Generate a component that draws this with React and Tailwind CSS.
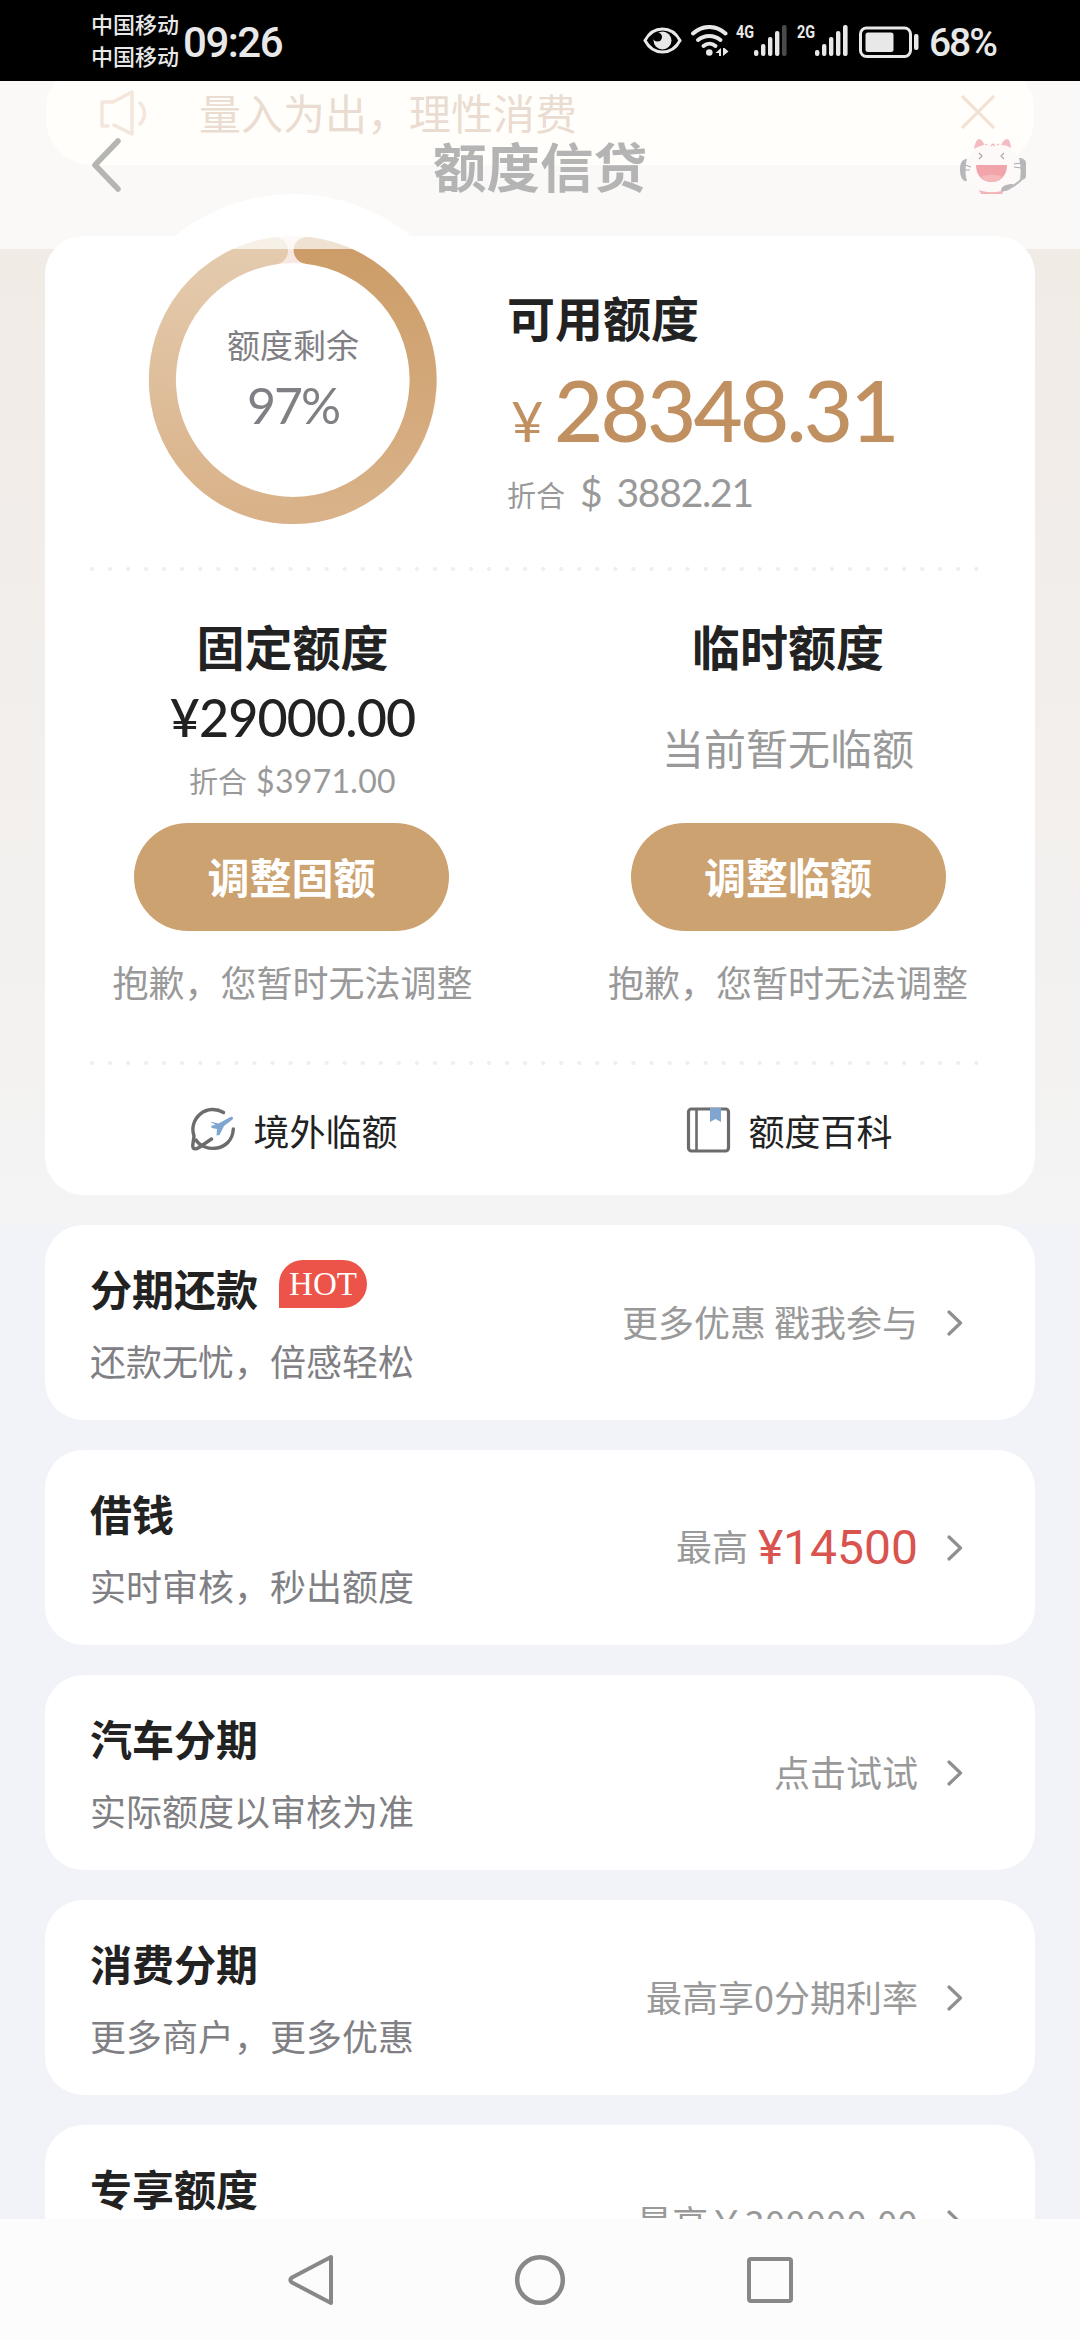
import React from 'react';

const services = [
  { title: '分期还款', desc: '还款无忧，倍感轻松', action: '更多优惠 戳我参与', hot: true },
  { title: '借钱', desc: '实时审核，秒出额度', action: '最高', amount: '¥14500' },
  { title: '汽车分期', desc: '实际额度以审核为准', action: '点击试试' },
  { title: '消费分期', desc: '更多商户，更多优惠', action: '最高享0分期利率' },
  { title: '专享额度', action: '最高', limit: '￥300000.00' },
];

const SignalBars = ({ label, weak }) => (
  <div className="flex h-[31px] items-start">
    <span className="w-[18px] origin-left scale-x-[0.8] text-[18px] leading-[14px] font-bold font-['Roboto',sans-serif]">{label}</span>
    <svg className="h-[31px] w-[34px]" viewBox="0 0 34 31" fill="#e8e8e8">
      <rect x="0" y="25" width="4.4" height="6" rx="2" />
      <rect x="7" y="19" width="4.4" height="12" rx="2" />
      <rect x="14" y="12" width="4.4" height="19" rx="2" />
      <rect x="21" y="6" width="4.4" height="25" rx="2" />
      <rect x="28" y="0" width="4.6" height="31" rx="2" fill={weak ? '#4a4a4a' : '#e8e8e8'} />
    </svg>
  </div>
);

const StatusBar = () => (
  <div className="flex h-[81px] shrink-0 items-start justify-between bg-black pl-[91px] pr-[84px] text-[#e8e8e8]">
    <div className="flex">
      <div className="flex flex-col gap-[10px] pt-[12px] text-[22px] leading-[22px] font-medium">
        <span>中国移动</span>
        <span>中国移动</span>
      </div>
      <span className="pt-[21px] pl-[4px] text-[42px] leading-[44px] font-medium tracking-[-1.500px] font-['Roboto',sans-serif]">09:26</span>
    </div>
    <div className="flex pt-[25px]">
      {/* Eye comfort */}
      <svg className="mt-[2px] h-[27px] w-[39px]" viewBox="0 0 39 27" fill="none">
        <path d="M2 13.5C6 6 12.500 2 19.500 2S33 6 37 13.500C33 21 26.500 25 19.500 25S6 21 2 13.500Z" stroke="#e8e8e8" strokeWidth="3" />
        <circle cx="19.500" cy="13.500" r="9" fill="#e8e8e8" />
        <circle cx="14.500" cy="10" r="4.500" fill="#000" />
      </svg>
      {/* Wifi */}
      <svg className="ml-[9px] h-[31px] w-[38px]" viewBox="0 0 38 31" fill="none">
        <path d="M2 8.500C11.500-.2 25-.2 34.500 8.500" stroke="#e8e8e8" strokeWidth="4" strokeLinecap="round" />
        <path d="M7 15C13.500 9.500 23 9.500 29.500 15" stroke="#e8e8e8" strokeWidth="4" strokeLinecap="round" />
        <path d="M12.500 21C16 18 21 18 24.500 21" stroke="#e8e8e8" strokeWidth="4" strokeLinecap="round" />
        <circle cx="18.300" cy="27.500" r="3.300" fill="#e8e8e8" />
        <path d="M30 23v8h-2v-3h-3.500zM32 31v-8h1.500l4 3.500z" fill="#e8e8e8" />
      </svg>
      <div className="ml-[7px]"><SignalBars label="4G" weak /></div>
      <div className="ml-[9px]"><SignalBars label="2G" /></div>
      {/* Battery */}
      <svg className="ml-[9px] h-[33px] w-[62px]" viewBox="0 0 62 33" fill="none">
        <rect x="2.500" y="3" width="50" height="28.500" rx="6" stroke="#e8e8e8" strokeWidth="3" />
        <rect x="7.500" y="7.500" width="28" height="19.500" rx="2.500" fill="#e8e8e8" />
        <rect x="56" y="9" width="4.500" height="16" rx="2" fill="#e8e8e8" />
      </svg>
      <span className="ml-[9px] mt-[-4px] text-[39px] leading-[44px] font-medium tracking-[-2px] font-['Roboto',sans-serif]">68%</span>
    </div>
  </div>
);

const CatAvatar = () => (
  <svg className="h-[56px] w-[68px]" viewBox="0 0 68 56" fill="none">
    <ellipse cx="34" cy="29" rx="27" ry="24" fill="#fdf9f9" />
    <path d="M15 11C16 5 18 1 20 1s5 3 5 6c-4 1-7 2-10 4ZM42 7c2-4 4-6 6-6s4 4 4 9c-3-2-6-3-10-3Z" fill="#f3bcc2" />
    <path d="M26 6l2 1M38 7l2-1M32 8l2-2 2 2" stroke="#f0b5ba" strokeWidth="1.200" />
    <path d="M20 15l3 3-3 3M45 15l-3 3 3 3" stroke="#a9a9a9" strokeWidth="1.200" />
    <path d="M17 27h31c0 10-6 17-15.500 17S17 37 17 27Z" fill="#f1a4aa" />
    <path d="M22 39c4-3 17-3 21 0-3 3-6 5-10.500 5S25 42 22 39Z" fill="#f5b9bb" />
    <path d="M20 52c8 3 18 3 25 0l-2 4H22z" fill="#f3b4b8" />
    <path d="M8 21c-5 0-7 4-7 11s3 12 7 11c-2-6-2-15 0-22ZM60 20c4 0 7 2 7 5v13c0 3-3 4-6 4 1-7 1-15-1-22Z" fill="#b7b6b9" />
    <path d="M6 27l6 2M6 32h5M62 25l-7 1M62 30l-7-1" stroke="#aaa" strokeWidth="1" />
    <path d="M63 41C58 46 55 48 50 50" stroke="#b7b6b9" strokeWidth="2" />
    <path d="M42 53c0-5 5-7 12-7-1 5-6 8-12 7Z" fill="#b7b6b9" />
  </svg>
);

const Header = () => (
  <div className="absolute inset-x-0 top-0 z-10 flex h-[168px] items-start justify-between bg-white/70 pl-[91px] pr-[53px] pt-[57px]">
    <svg className="h-[54px] w-[68px]" viewBox="0 0 68 54" fill="none">
      <path d="M27 3L4 27l23 24" stroke="#b5b5b2" strokeWidth="5.500" strokeLinecap="round" strokeLinejoin="round" />
    </svg>
    <h1 className="mr-[38px] text-[53.5px] leading-[54px] font-bold text-[#b4b4b4]">额度信贷</h1>
    <CatAvatar />
  </div>
);

const Notice = () => (
  <div className="mx-[46px] mt-[-18px] flex h-[102px] shrink-0 items-center rounded-[46px] bg-[#fffcee] pl-[53px] pr-[39px]">
    <svg className="mb-[3px] h-[46px] w-[50px]" viewBox="0 0 50 46" fill="none" stroke="#cf9e78" strokeOpacity="0.85" strokeWidth="3.500" strokeLinecap="round" strokeLinejoin="round">
      <path d="M9 36H3V12h11L33 2v42L15 35" />
      <path d="M41 13c6 6 6 15 0 21" />
    </svg>
    <span className="mb-[5px] ml-[50px] flex-1 text-[42px] leading-[42px] text-[#b88a66]">量入为出，理性消费</span>
    <svg className="mb-[5px] h-[34px] w-[34px]" viewBox="0 0 34 34" fill="none" stroke="#d89c6c" strokeWidth="3.200">
      <path d="M1 1l32 32M33 1L1 33" />
    </svg>
  </div>
);

const QuotaRing = () => (
  <div className="relative h-[288px] w-[288px]">
    {/* White halo that rises above the card edge */}
    <div className="absolute -inset-[42px] rounded-full bg-white"></div>
    <svg className="absolute inset-0" width="288" height="288" viewBox="0 0 288 288" fill="none">
      <defs>
        <linearGradient id="ringRight" x1="0" y1="0" x2="0" y2="1">
          <stop offset="0" stopColor="#cc9d68" />
          <stop offset="1" stopColor="#d9b289" />
        </linearGradient>
        <linearGradient id="ringLeft" x1="0" y1="1" x2="0" y2="0">
          <stop offset="0" stopColor="#d9b289" />
          <stop offset="1" stopColor="#e4cbae" />
        </linearGradient>
      </defs>
      <circle cx="144" cy="144" r="130.500" stroke="#f7e9e1" strokeWidth="27" />
      <path d="M144 274.500A130.500 130.500 0 0 1 125.500 14.800" stroke="url(#ringLeft)" strokeWidth="27" strokeLinecap="round" />
      <path d="M158 14.300A130.500 130.500 0 0 1 144 274.500" stroke="url(#ringRight)" strokeWidth="27" />
      <circle cx="158" cy="14.300" r="13.400" fill="#cc9d68" />
    </svg>
    <div className="relative flex h-full flex-col items-center pt-[92px] text-[#808084]">
      <span className="text-[33px] leading-[33px]">额度剩余</span>
      <span className="mt-[19px] text-[50px] leading-[50px] tracking-[-2px] font-['Lato',sans-serif]">97%</span>
    </div>
  </div>
);

const DottedLine = () => (
  <div className="ml-[45px] h-[4px] w-[900px] shrink-0 bg-[radial-gradient(circle_at_2px_2px,#eeeeee_1.5px,transparent_2.5px)] bg-[length:18.050px_4px]"></div>
);

const AdjustButton = ({ children }) => (
  <button className="h-[108px] w-[315px] rounded-full bg-[#cca270] pb-[2px] text-[42px] leading-[42px] font-bold text-white">{children}</button>
);

const QuotaCard = () => (
  <div className="mx-[45px] mt-[71px] flex h-[959px] shrink-0 flex-col rounded-[38px] bg-white">
    <div className="flex h-[331px] pl-[104px]">
      <QuotaRing />
      <div className="ml-[70px] pt-[56px]">
        <h2 className="text-[48px] leading-[48px] font-bold text-[#222]">可用额度</h2>
        <div className="mt-[26px] flex items-baseline font-['Lato',sans-serif] text-[#c09060]">
          <span className="w-[47px] pl-[4px] text-[56px] leading-[86px]">¥</span>
          <span className="text-[85px] leading-[86px] font-medium tracking-[-2.800px]">28348.31</span>
        </div>
        <div className="mt-[8px] flex items-baseline text-[#999]">
          <span className="text-[29px] leading-[40px]">折合</span>
          <span className="ml-[15px] text-[39px] leading-[40px] tracking-[-1.200px] font-['Lato',sans-serif]">$</span>
          <span className="ml-[15px] text-[39px] leading-[40px] tracking-[-1.200px] font-['Lato',sans-serif]">3882.21</span>
        </div>
      </div>
    </div>
    <DottedLine />
    <div className="grid h-[490px] grid-cols-2 text-[#999]">
      <div className="flex flex-col items-center pt-[50px]">
        <h2 className="text-[48px] leading-[48px] font-bold text-[#222]">固定额度</h2>
        <span className="mt-[22px] text-[52px] leading-[52px] tracking-[-0.900px] font-medium text-[#222] font-['Lato',sans-serif]">¥29000.00</span>
        <div className="mt-[19px] flex items-baseline">
          <span className="text-[29px] leading-[36px]">折合</span>
          <span className="ml-[9px] text-[32px] leading-[36px] tracking-[0.300px] font-['Lato',sans-serif]">$3971.00</span>
        </div>
        <div className="mt-[24px] pr-[2px]"><AdjustButton>调整固额</AdjustButton></div>
        <p className="mt-[32px] text-[36px] leading-[36px]">抱歉，您暂时无法调整</p>
      </div>
      <div className="flex flex-col items-center pl-px pt-[50px]">
        <h2 className="text-[48px] leading-[48px] font-bold text-[#222]">临时额度</h2>
        <span className="mt-[57px] text-[42px] leading-[42px]">当前暂无临额</span>
        <div className="mt-[55px]"><AdjustButton>调整临额</AdjustButton></div>
        <p className="mt-[32px] text-[36px] leading-[36px]">抱歉，您暂时无法调整</p>
      </div>
    </div>
    <DottedLine />
    <div className="grid grid-cols-2 pt-[42px] text-[36px] leading-[46px] text-[#222]">
      <div className="flex justify-center gap-[17px] pl-[4px]">
        <svg className="h-[46px] w-[45px]" viewBox="0 0 45 46" fill="none" strokeLinecap="round">
          <path d="M32.500 5.500A20 20 0 0 0 3 29L1.800 38C1.500 42 4 43 8 40.500L20.500 32" stroke="#6c6c6e" strokeWidth="3.400" />
          <path d="M5 33C13 46 41 45 42.300 22" stroke="#6c6c6e" strokeWidth="3.400" />
          <path d="M19 14.500l8.500 2L39.500 10c2-.8 3.500 1 2 2.500L33 19l-4.500 9-3 .5.500-6.500-5.500-1v-2.500l4-.5z" fill="#7fa6d0" />
        </svg>
        <span>境外临额</span>
      </div>
      <div className="flex justify-center gap-[17px] pl-[4px]">
        <svg className="h-[46px] w-[45px]" viewBox="0 0 45 46" fill="none">
          <rect x="2.500" y="2" width="40" height="42" rx="3" stroke="#6c6c6e" strokeWidth="3.200" />
          <path d="M10.500 2v42" stroke="#6c6c6e" strokeWidth="2.600" />
          <path d="M24 1h11v14l-5.500-3-5.500 3z" fill="#7fa6d0" />
        </svg>
        <span>额度百科</span>
      </div>
    </div>
  </div>
);

const ServiceRow = ({ item }) => (
  <div className="flex h-[195px] shrink-0 justify-between rounded-[38px] bg-white pl-[45px] pr-[72px]">
    <div className="pt-[35px]">
      <div className="flex h-[58px] items-start">
        <h3 className="pt-[7px] text-[42px] leading-[42px] font-bold text-[#222]">{item.title}</h3>
        {item.hot && (
          <span className="ml-[21px] flex h-[48px] w-[88px] items-center justify-center rounded-t-[24px] rounded-br-[24px] bg-[#ec5349] text-[33px] leading-[33px] text-white font-['Liberation_Serif',serif]">HOT</span>
        )}
      </div>
      {item.desc && <p className="mt-[24px] text-[36px] leading-[36px] text-[#808084]">{item.desc}</p>}
    </div>
    <div className="flex h-[195px] items-center text-[36px] leading-[48px] text-[#999]">
      <span className={item.amount ? 'mb-[6px]' : 'mb-[3px]'}>{item.action}</span>
      {item.amount && <span className="ml-[10px] text-[48px] text-[#d9534f] font-['Roboto',sans-serif]">{item.amount}</span>}
      {item.limit && <span className="mb-[3px] tracking-[0.400px]">{item.limit}</span>}
      <svg className="ml-[29px] h-[26px] w-[16px]" viewBox="0 0 16 26" fill="none">
        <path d="M2 2l11.500 11L2 24" stroke="#8f8f8f" strokeWidth="3.200" strokeLinecap="round" strokeLinejoin="round" />
      </svg>
    </div>
  </div>
);

const NavBar = () => (
  <div className="z-10 flex h-[121px] shrink-0 items-center justify-center gap-[180px] bg-[#fcfcfc]">
    <svg className="h-[52px] w-[50px]" viewBox="0 0 50 52" fill="none" stroke="#888" strokeWidth="4" strokeLinejoin="round">
      <path d="M46 3v46L7 28.500Q3.500 26 7 23.500Z" />
    </svg>
    <svg className="h-[52px] w-[50px]" viewBox="0 0 50 52" fill="none" stroke="#888" strokeWidth="4.500">
      <circle cx="25" cy="26" r="22.800" />
    </svg>
    <svg className="h-[52px] w-[50px]" viewBox="0 0 50 52" fill="none" stroke="#888" strokeWidth="4">
      <rect x="4" y="5" width="42" height="42" rx="2" />
    </svg>
  </div>
);

export default function App() {
  return (
    <div className="flex h-[2340px] w-[1080px] flex-col overflow-hidden bg-[#f2f3f8] font-['Noto_Sans_CJK_SC',sans-serif]">
      <StatusBar />
      <main className="relative flex h-[2138px] shrink-0 flex-col overflow-hidden">
        <Header />
        <div className="flex h-[1144px] shrink-0 flex-col bg-linear-to-b from-[#f1eae4] via-[#f2eeeb] to-[#f4f4f4]">
          <Notice />
          <QuotaCard />
        </div>
        <div className="flex flex-col gap-[30px] px-[45px]">
          {services.map((item) => (
            <ServiceRow key={item.title} item={item} />
          ))}
        </div>
      </main>
      <NavBar />
    </div>
  );
}
